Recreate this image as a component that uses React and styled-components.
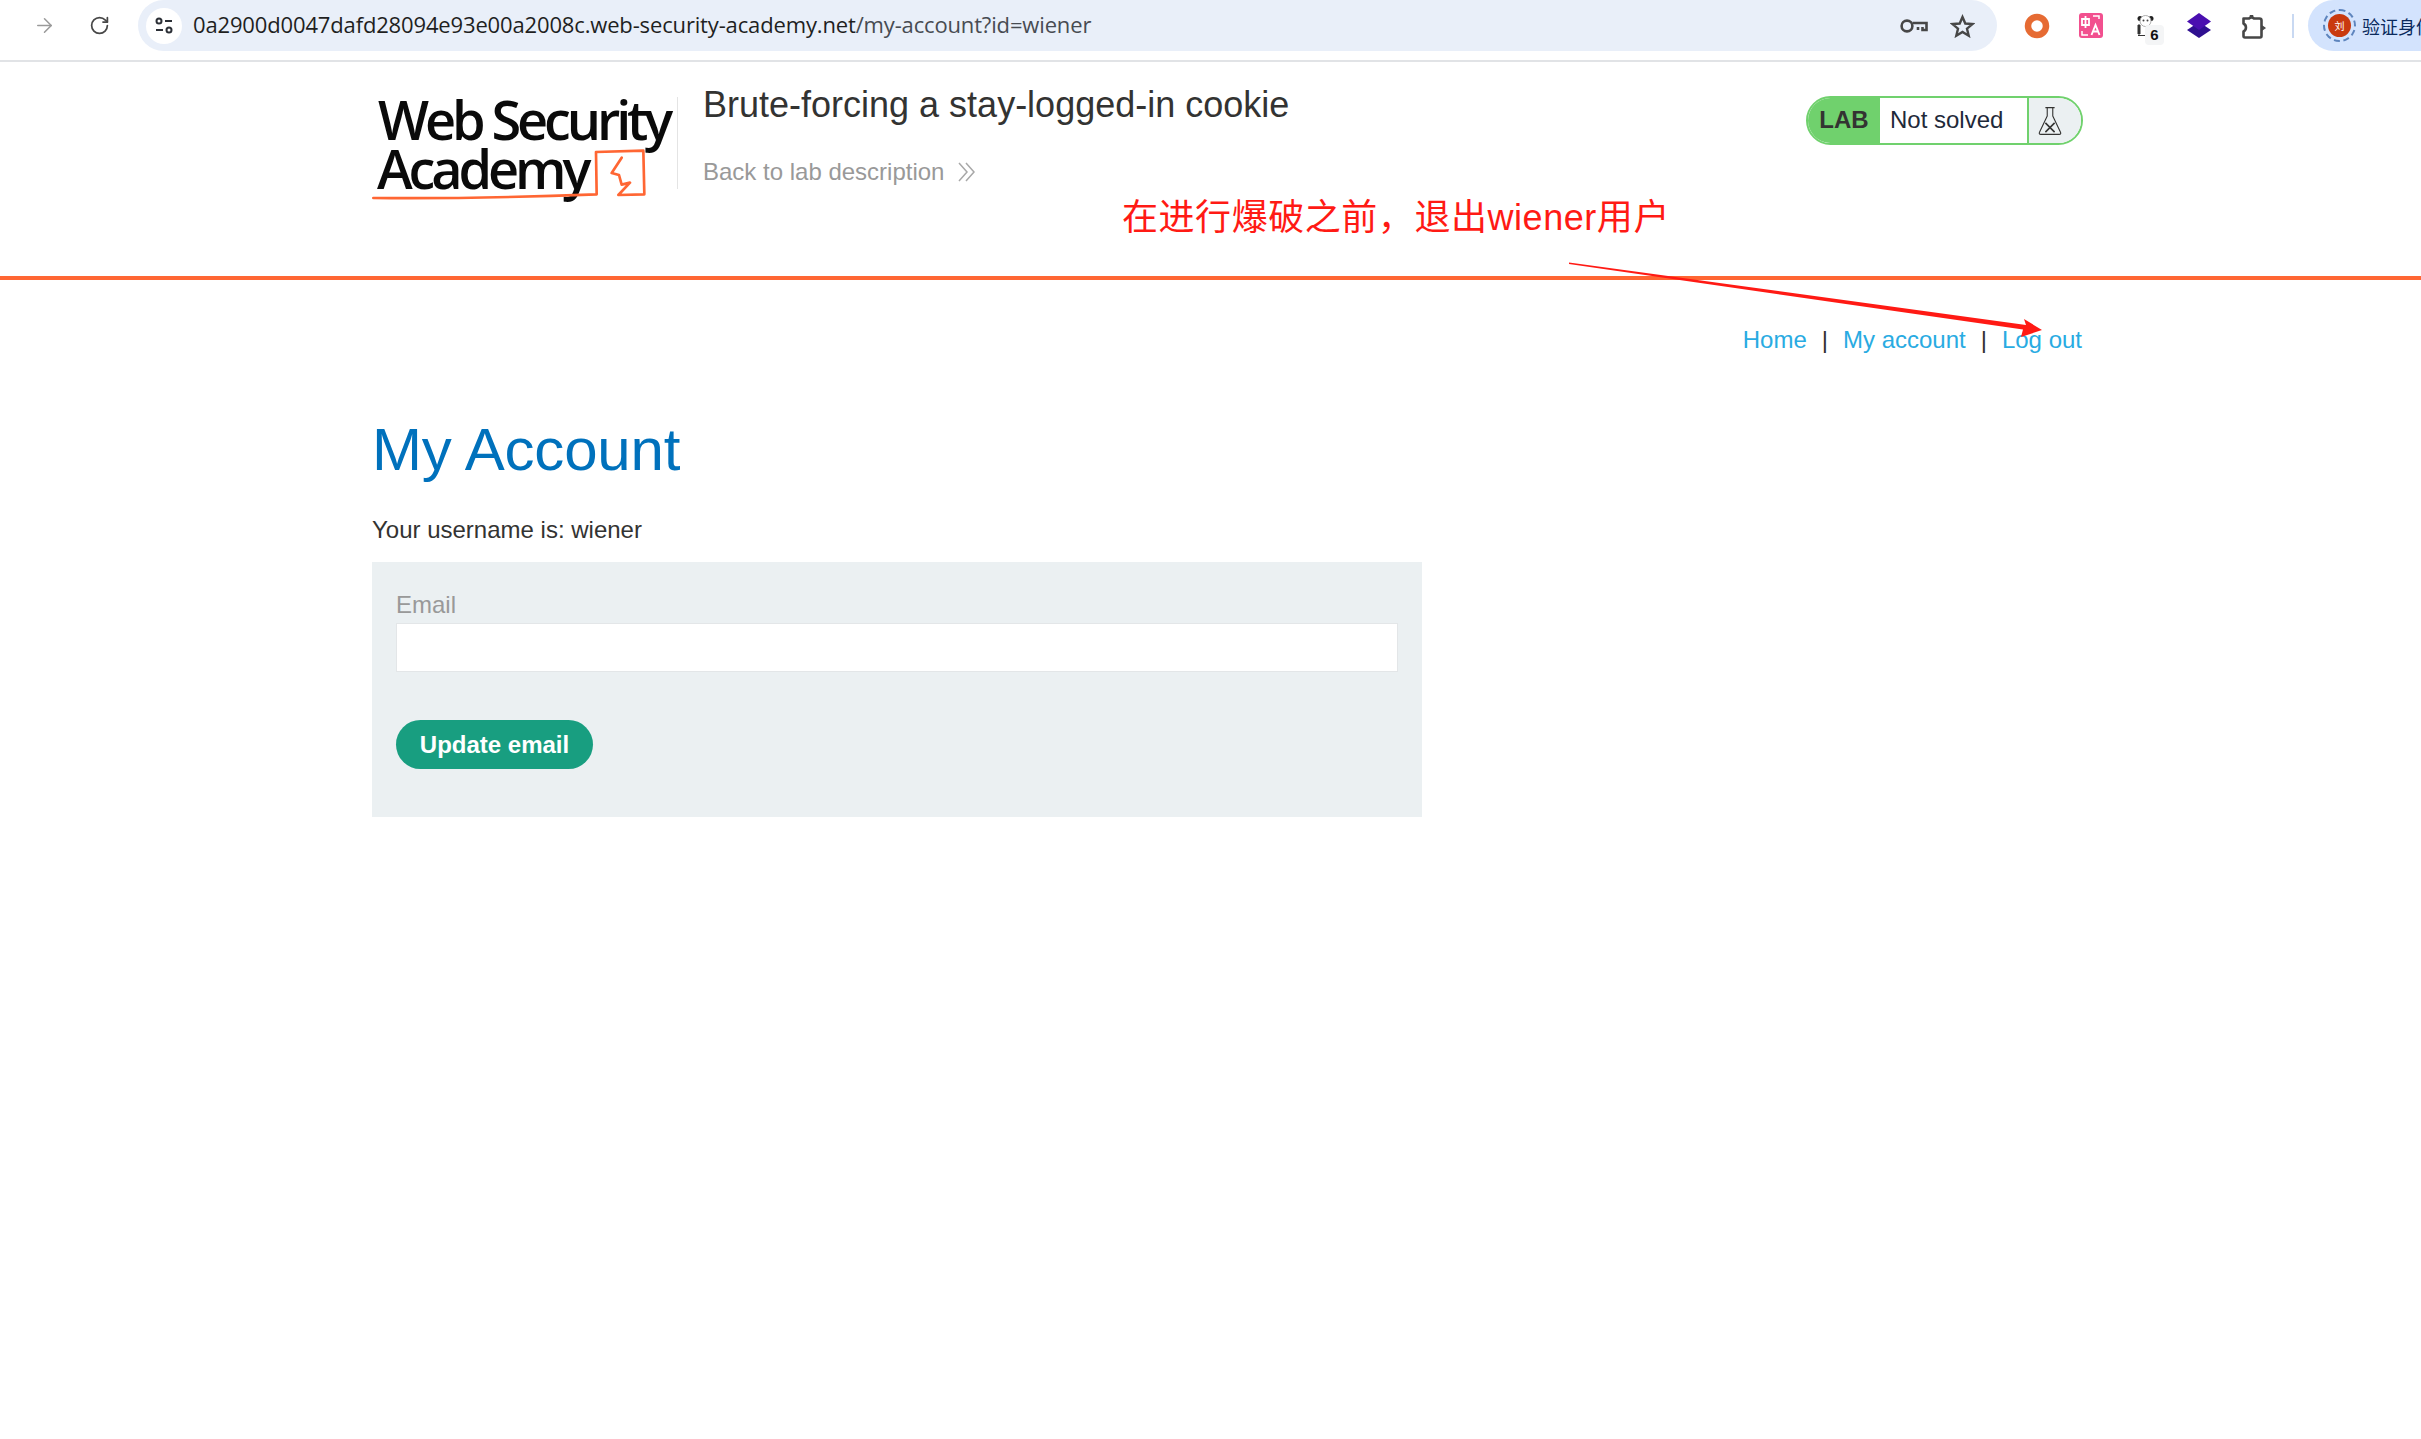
import React from "react";
import styled, { createGlobalStyle } from "styled-components";
import { ArrowRight, RotateCw } from "lucide-react";

const GlobalStyle = createGlobalStyle`
  html, body {
    margin: 0;
    padding: 0;
    background: #fff;
    overflow: hidden;
  }
  body {
    font-family: "Liberation Sans", Arial, sans-serif;
    color: #333332;
  }
`;

const Page = styled.div`
  position: relative;
  width: 2421px;
  height: 1439px;
  overflow: hidden;
  background: #fff;
`;

/* browser chrome */
const BrowserBar = styled.div`
  display: flex;
  align-items: flex-start;
  height: 60px;
  border-bottom: 2px solid #e1e3e6;
  background: #fff;
`;
const ToolIcon = styled.div`
  flex: none;
  display: flex;
  align-items: center;
  justify-content: center;
  width: ${(p) => p.$w || 54}px;
  height: 51px;
  color: ${(p) => p.$color || "#474747"};
  position: relative;
`;
const NavIcons = styled.div`
  display: flex;
  width: 138px;
  padding-left: 17px;
  box-sizing: border-box;
`;
const Address = styled.div`
  flex: none;
  display: flex;
  align-items: center;
  width: 1859px;
  height: 51px;
  padding: 0 11px 0 8px;
  box-sizing: border-box;
  background: #e9eff9;
  border-radius: 26px;
`;
const SiteInfo = styled.div`
  flex: none;
  display: flex;
  align-items: center;
  justify-content: center;
  width: 36px;
  height: 36px;
  border-radius: 50%;
  background: #fff;
  margin-right: 11px;
`;
const Url = styled.div`
  flex: 1;
  margin-top: -3px;
  font-family: "Open Sans", sans-serif;
  font-size: 22px;
  letter-spacing: -0.15px;
  color: #1f1f1f;
  white-space: nowrap;
  span {
    color: #474b52;
  }
`;
const Extensions = styled.div`
  flex: none;
  display: flex;
  padding-left: 13px;
`;
const ExtBadge = styled.div`
  position: absolute;
  left: 27px;
  top: 25px;
  width: 19px;
  height: 20px;
  border-radius: 4px;
  background: #f4f5f6;
  color: #111;
  font-size: 15px;
  font-weight: 700;
  line-height: 20px;
  text-align: center;
`;
const BarDivider = styled.div`
  flex: none;
  width: 2px;
  height: 24px;
  margin: 14px 14px 0 12px;
  background: #c9d9f2;
`;
const Profile = styled.div`
  flex: 1;
  display: flex;
  align-items: center;
  gap: 6px;
  height: 51px;
  padding-left: 15px;
  border-radius: 26px 0 0 26px;
  background: #d3e3fd;
  font-family: "Noto Sans CJK SC", sans-serif;
  font-size: 18px;
  color: #0a2a5c;
  white-space: nowrap;
  overflow: hidden;
`;
const AvatarRing = styled.div`
  flex: none;
  display: flex;
  align-items: center;
  justify-content: center;
  width: 29px;
  height: 29px;
  border-radius: 50%;
  border: 2px dashed #5d84bd;
`;
const Avatar = styled.div`
  width: 23px;
  height: 23px;
  border-radius: 50%;
  background: #c9390e;
  color: #fff;
  font-size: 10px;
  line-height: 23px;
  text-align: center;
`;

/* lab header */
const LabHeader = styled.header`
  height: 214px;
  border-bottom: 4px solid #ff6633;
`;
const Inner = styled.div`
  width: 1711px;
  margin-left: 372px;
  box-sizing: border-box;
`;
const HeaderRow = styled(Inner)`
  display: flex;
  align-items: flex-start;
`;
const Logo = styled.div`
  position: relative;
  flex: none;
  width: 306px;
  height: 92px;
  margin-top: 35px;
  border-right: 1px solid #e4e4e4;
  box-sizing: border-box;
  font-family: "Open Sans", sans-serif;
  color: #0a0a0a;
`;
const LogoLine = styled.div`
  position: absolute;
  left: ${(p) => p.$left}px;
  top: ${(p) => p.$top}px;
  font-size: 54px;
  line-height: 60px;
  font-weight: 600;
  letter-spacing: -4.1px;
  white-space: nowrap;
`;
const LogoMark = styled.svg`
  position: absolute;
  left: -12px;
  top: -10px;
  width: 320px;
  height: 125px;
`;
const TitleBlock = styled.div`
  flex: 1;
  padding: 21px 0 0 25px;
`;
const Title = styled.h2`
  margin: 0;
  font-size: 36px;
  line-height: 44px;
  font-weight: 400;
  color: #333332;
`;
const BackLink = styled.a`
  display: flex;
  align-items: center;
  gap: 14px;
  margin-top: 30px;
  font-size: 24px;
  line-height: 30px;
  color: #999;
`;
const StatusBadge = styled.div`
  flex: none;
  display: flex;
  width: 277px;
  height: 49px;
  margin-top: 34px;
  box-sizing: border-box;
  border: 2px solid #70d16d;
  border-radius: 25px;
  overflow: hidden;
  font-size: 24px;
  line-height: 43px;
`;
const BadgeTag = styled.div`
  flex: none;
  width: 72px;
  background: #70d16d;
  font-weight: 700;
  text-align: center;
  color: #333332;
`;
const BadgeText = styled.div`
  flex: 1;
  padding-left: 10px;
  color: #1f2a3a;
`;
const BadgeIcon = styled.div`
  flex: none;
  display: flex;
  align-items: center;
  justify-content: center;
  width: 54px;
  padding-right: 10px;
  border-left: 2px solid #70d16d;
  background: #ebf0f2;
  box-sizing: border-box;
`;

/* page content */
const TopLinks = styled.nav`
  display: flex;
  justify-content: flex-end;
  align-items: center;
  gap: 15px;
  padding: 45px 1px 0 0;
  font-size: 24px;
  line-height: 30px;
`;
const TopLink = styled.a`
  color: #29abe2;
`;
const LinkSep = styled.span`
  color: #333332;
`;
const Heading = styled.h1`
  margin: 59px 0 0;
  font-size: 60px;
  line-height: 72px;
  font-weight: 400;
  letter-spacing: -0.2px;
  color: #0071bc;
`;
const Username = styled.p`
  margin: 29px 0 0;
  font-size: 24px;
  line-height: 30px;
  color: #333332;
`;
const EmailForm = styled.form`
  width: 1050px;
  height: 255px;
  margin-top: 17px;
  padding: 28px 24px 0;
  box-sizing: border-box;
  background: #ebf0f2;
`;
const FieldLabel = styled.label`
  display: block;
  font-size: 24px;
  line-height: 30px;
  color: #999;
`;
const EmailInput = styled.div`
  height: 49px;
  margin-top: 3px;
  box-sizing: border-box;
  background: #fff;
  border: 1px solid #e3e6e8;
`;
const SubmitButton = styled.div`
  width: 197px;
  height: 49px;
  margin-top: 48px;
  border-radius: 25px;
  background: #189e80;
  color: #fff;
  font-size: 24px;
  font-weight: 700;
  line-height: 49px;
  text-align: center;
`;

/* screenshot annotation on top of the page */
const Note = styled.div`
  position: absolute;
  left: 1122px;
  top: 194px;
  font-family: "Liberation Sans", "Noto Sans CJK SC", sans-serif;
  font-size: 36px;
  line-height: 48px;
  letter-spacing: 0.55px;
  color: #ff1a14;
  white-space: nowrap;
`;
const NoteArrow = styled.svg`
  position: absolute;
  left: 1560px;
  top: 255px;
  width: 490px;
  height: 90px;
`;

const KeyIcon = () => (
  <svg width="28" height="16" viewBox="0 0 28 16" fill="none" stroke="#474747" strokeWidth="2.6">
    <circle cx="7" cy="8" r="5.4" />
    <path d="M12.500 5h14v7h-4V9M18 9v3" />
  </svg>
);

const StarIcon = () => (
  <svg width="25" height="24" viewBox="0 0 25 24" fill="none" stroke="#474747" strokeWidth="2.4" strokeLinejoin="miter">
    <path d="M12.500 3l2.800 6.500 7.200.6-5.500 4.600 1.700 7-6.200-3.700-6.200 3.700 1.700-7L2.500 10.100l7.200-.6z" />
  </svg>
);

const TuneIcon = () => (
  <svg width="18" height="20" viewBox="0 0 18 20" fill="none" stroke="#2b2f36" strokeWidth="2">
    <circle cx="4" cy="5" r="2.5" />
    <path d="M10 5h7M1 14h7" />
    <circle cx="14" cy="14" r="2.5" />
  </svg>
);

const TranslateIcon = () => (
  <svg width="24" height="25" viewBox="0 0 24 25">
    <rect width="24" height="25" rx="3" fill="#f2508f" />
    <path d="M3 6h7v6H3zM6.500 3v12" fill="none" stroke="#fff" strokeWidth="1.800" />
    <path d="M14 3h6v3M3 18v4h6" fill="none" stroke="#fff" strokeWidth="1.500" />
    <path d="M12.500 22l4-10 4 10M14 18.500h5" fill="none" stroke="#fff" strokeWidth="1.900" />
  </svg>
);

const PandaIcon = () => (
  <svg width="17" height="22" viewBox="0 0 17 22">
    <circle cx="3" cy="3.500" r="2.500" fill="#222" />
    <circle cx="14" cy="3.500" r="2.500" fill="#222" />
    <circle cx="8.500" cy="6" r="5.500" fill="#fff" stroke="#999" strokeWidth="0.800" />
    <circle cx="6.500" cy="5.500" r="1" fill="#444" />
    <circle cx="10.500" cy="5.500" r="1" fill="#444" />
    <path d="M1 10h2v9H1zM1 20.500h10" stroke="#333" strokeWidth="1" fill="#333" />
  </svg>
);

const LayersIcon = () => (
  <svg width="24" height="25" viewBox="0 0 24 25">
    <path d="M12 9l12 8-12 8-12-8z" fill="#2f1090" />
    <path d="M12 0l12 8.500-12 8.500L0 8.500z" fill="#4a0fb0" />
  </svg>
);

const PuzzleIcon = () => (
  <svg width="27" height="26" viewBox="0 0 27 26" fill="none" stroke="#474747" strokeWidth="2.600" strokeLinejoin="round">
    <path d="M3.500 5.500h5.500a3.500 3.500 0 0 1 5 0h5.500a2 2 0 0 1 2 2V23a1.500 1.500 0 0 1-1.500 1.500H5a1.500 1.500 0 0 1-1.500-1.500v-4.500a4.500 4.500 0 0 0 0-8z" />
    <path d="M22 13l3 2-3 2z" fill="#474747" strokeWidth="1.500" />
    <path d="M11.500 2v3" strokeWidth="3.500" />
  </svg>
);

const DoubleChevron = () => (
  <svg width="18" height="20" viewBox="0 0 18 20" fill="none" stroke="#a8a8a8" strokeWidth="1.500">
    <path d="M1 1l8 9-8 9M8 1l8 9-8 9" />
  </svg>
);

const FlaskIcon = () => (
  <svg width="24" height="30" viewBox="0 0 26 32" fill="none" stroke="#333332" strokeWidth="1.200" strokeLinejoin="round">
    <path d="M8 1.500h10M10 1.500v9L1.500 28.500q-.6 2 1.500 2h20q2.100 0 1.500-2L16 10.500v-9" />
    <path d="M8 18l10 10M18 18L8 28" strokeWidth="1.700" />
  </svg>
);

const App = () => {
  return (
    <Page>
      <GlobalStyle />
      <BrowserBar>
        <NavIcons>
          <ToolIcon $w={54} $color="#9a9a9a">
            <ArrowRight size={23} strokeWidth={1.6} />
          </ToolIcon>
          <ToolIcon $w={56}>
            <RotateCw size={21} strokeWidth={2} />
          </ToolIcon>
        </NavIcons>
        <Address>
          <SiteInfo>
            <TuneIcon />
          </SiteInfo>
          <Url>
            0a2900d0047dafd28094e93e00a2008c.web-security-academy.net<span>/my-account?id=wiener</span>
          </Url>
          <ToolIcon $w={48}>
            <KeyIcon />
          </ToolIcon>
          <ToolIcon $w={48}>
            <StarIcon />
          </ToolIcon>
        </Address>
        <Extensions>
          <ToolIcon>
            <svg width="26" height="26" viewBox="0 0 26 26" fill="none">
              <circle cx="13" cy="13" r="9" stroke="#e66b33" strokeWidth="6.500" />
            </svg>
          </ToolIcon>
          <ToolIcon>
            <TranslateIcon />
          </ToolIcon>
          <ToolIcon>
            <PandaIcon />
            <ExtBadge>6</ExtBadge>
          </ToolIcon>
          <ToolIcon>
            <LayersIcon />
          </ToolIcon>
          <ToolIcon>
            <PuzzleIcon />
          </ToolIcon>
        </Extensions>
        <BarDivider />
        <Profile>
          <AvatarRing>
            <Avatar>刘</Avatar>
          </AvatarRing>
          验证身份
        </Profile>
      </BrowserBar>

      <LabHeader>
        <HeaderRow>
          <Logo>
            <LogoLine $left={6} $top={-8}>Web Security</LogoLine>
            <LogoLine $left={5} $top={41}>Academy</LogoLine>
            <LogoMark viewBox="0 0 960 375" fill="none" stroke="#ff6633" strokeLinejoin="round" strokeLinecap="round">
              <path d="M40 333q300 3 670-11L708 195l142-4 3 131-78 2 35-37-25 6-8-29-22-6 30-46" strokeWidth="8" />
            </LogoMark>
          </Logo>
          <TitleBlock>
            <Title>Brute-forcing a stay-logged-in cookie</Title>
            <BackLink>
              Back to lab description
              <DoubleChevron />
            </BackLink>
          </TitleBlock>
          <StatusBadge>
            <BadgeTag>LAB</BadgeTag>
            <BadgeText>Not solved</BadgeText>
            <BadgeIcon>
              <FlaskIcon />
            </BadgeIcon>
          </StatusBadge>
        </HeaderRow>
      </LabHeader>

      <Inner>
        <TopLinks>
          <TopLink>Home</TopLink>
          <LinkSep>|</LinkSep>
          <TopLink>My account</TopLink>
          <LinkSep>|</LinkSep>
          <TopLink>Log out</TopLink>
        </TopLinks>
        <Heading>My Account</Heading>
        <Username>Your username is: wiener</Username>
        <EmailForm>
          <FieldLabel>Email</FieldLabel>
          <EmailInput />
          <SubmitButton>Update email</SubmitButton>
        </EmailForm>
      </Inner>

      <Note>在进行爆破之前，退出wiener用户</Note>
      <NoteArrow viewBox="0 0 490 90">
        <path d="M9 7.500L9 9 463 74.500 461 82 482 75 464 64 466 70z" fill="#ff1a14" />
      </NoteArrow>
    </Page>
  );
};

export default App;
